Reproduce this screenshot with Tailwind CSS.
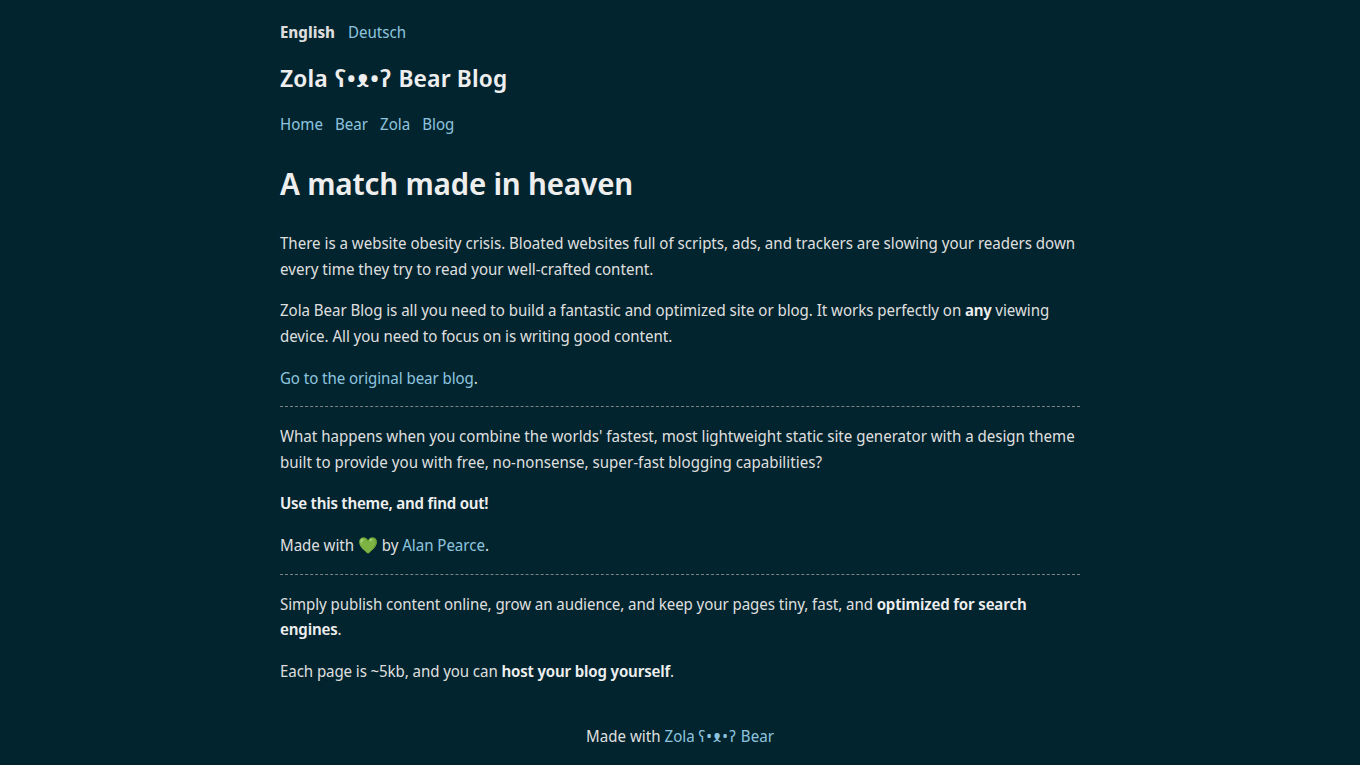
<!DOCTYPE html>
<html lang="en">
<head>
<meta charset="utf-8">
<title>Zola ʕ•ᴥ•ʔ Bear Blog</title>
<script src="https://cdn.jsdelivr.net/npm/@tailwindcss/browser@4"></script>
</head>
<body class="h-[765px] overflow-hidden bg-[#01242e] text-[#ddd] text-[16px] leading-[25.6px] font-['Noto_Sans_Display','Noto_Sans',sans-serif]">
<div class="w-[800px] mx-auto pt-5 whitespace-nowrap">
  <header>
    <nav class="flex gap-[13px]"><b class="font-bold">English</b><a class="text-[#8cc2dd]">Deutsch</a></nav>
    <h2 class="mt-[13px] text-[24px] leading-[38.4px] font-semibold tracking-[0.15px] text-[#eee]">Zola <span class="ml-px tracking-[1.5px]">ʕ•ᴥ•ʔ</span> Bear Blog</h2>
    <nav class="mt-[15px] flex gap-[12px] text-[#8cc2dd]"><a>Home</a><a>Bear</a><a>Zola</a><a>Blog</a></nav>
  </header>
  <main class="pt-[20px] flex flex-col gap-4">
    <h1 class="text-[31px] leading-[51.2px] mb-[5.4px] font-semibold tracking-[-0.15px] text-[#eee]">A match made in heaven</h1>
    <p class="pt-[1.1px] -mb-[1.1px] tracking-[-0.024px]">There is a website obesity crisis. Bloated websites full of scripts, ads, and trackers are slowing your readers down<br><span class="tracking-normal">every time they try to read your well-crafted content.</span></p>
    <p class="pt-[1px] -mb-[1px] tracking-[-0.055px]">Zola Bear Blog is all you need to build a fantastic and optimized site or blog. It works perfectly on <b class="font-semibold tracking-[-0.25px] text-[#eee]">any</b> viewing<br>device. All you need to focus on is writing good content.</p>
    <p class="pt-[1.3px] -mb-[1.3px] tracking-[-0.08px]"><a class="text-[#8cc2dd]">Go to the original bear blog</a>.</p>
    <hr class="border-0 border-t border-dashed border-[#808080]">
    <p class="pt-[1.2px] -mb-[1.2px] tracking-[-0.028px]">What happens when you combine the worlds' fastest, most lightweight static site generator with a design theme<br><span class="tracking-normal">built to provide you with free, no-nonsense, super-fast blogging capabilities?</span></p>
    <p class="pt-[0.8px] -mb-[0.8px]"><b class="font-semibold tracking-[-0.22px] text-[#eee]">Use this theme, and find out!</b></p>
    <p class="pt-[0.8px] -mb-[0.4px] tracking-[-0.05px]">Made with 💚 by <a class="text-[#8cc2dd]">Alan Pearce</a>.</p>
    <hr class="border-0 border-t border-dashed border-[#808080]">
    <p class="pt-[0.8px] -mb-[0.8px] tracking-[-0.085px]">Simply publish content online, grow an audience, and keep your pages tiny, fast, and <b class="font-semibold tracking-[-0.15px] text-[#eee]">optimized for search<br>engines</b>.</p>
    <p class="pt-[1.2px] -mb-[1.2px] tracking-[-0.1px]">Each page is ~5kb, and you can <b class="font-semibold tracking-[-0.15px] text-[#eee]">host your blog yourself</b>.</p>
  </main>
  <footer class="mt-[40.2px] text-center">Made with <a class="text-[#8cc2dd]">Zola <span class="tracking-[1.3px]">ʕ•ᴥ•ʔ</span> Bear</a></footer>
</div>
</body>
</html>
